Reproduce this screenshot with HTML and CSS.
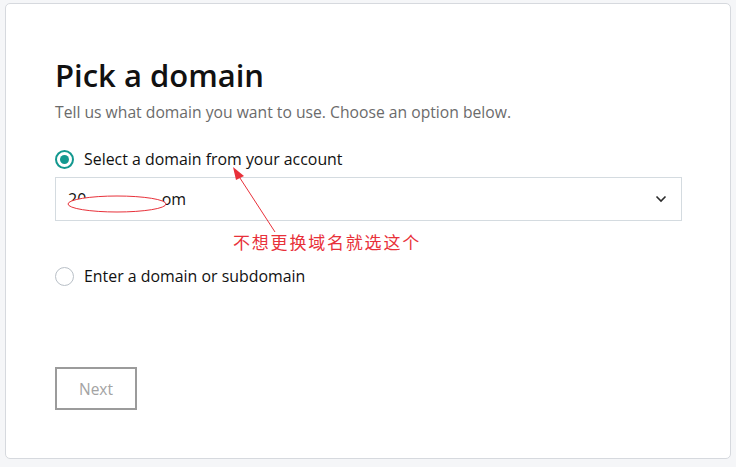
FILE: index.html
```html
<!DOCTYPE html>
<html>
<head>
<meta charset="utf-8">
<link rel="stylesheet" href="styles.css">
</head>
<body>
<div class="card">
  <h1 class="title">Pick a domain</h1>
  <p class="subtitle">Tell us what domain you want to use. Choose an option below.</p>
  <label class="option">
    <span class="radio checked"><span class="dot"></span></span>
    <span class="label">Select a domain from your account</span>
  </label>
  <div class="select">
    <span class="value">20<span class="hidden">xxxxxxxxx</span>om</span>
    <svg class="chev" width="12" height="8" viewBox="0 0 12 8"><path d="M1.5 1.5 L6 6 L10.5 1.5" fill="none" stroke="#2b2b2b" stroke-width="1.6"/></svg>
  </div>
  <div class="note-row"><span class="note">不想更换域名就选这个</span></div>
  <label class="option option2">
    <span class="radio"></span>
    <span class="label">Enter a domain or subdomain</span>
  </label>
  <button class="next">Next</button>
  <svg class="overlay" width="736" height="467" viewBox="0 0 736 467">
    <ellipse cx="117" cy="204" rx="49" ry="8" fill="#fff" stroke="#e8313a" stroke-width="1"/>
    <line x1="275" y1="232" x2="238" y2="175" stroke="#e8313a" stroke-width="1"/>
    <polygon points="233,167 244,176 236,180" fill="#e8313a"/>
  </svg>
</div>
</body>
</html>
```
FILE: styles.css
```css
html, body { margin: 0; padding: 0; }
body {
  background: #f5f6f8;
  width: 736px;
  height: 467px;
  font-family: "Open Sans", "Liberation Sans", sans-serif;
  color: #111;
  overflow: hidden;
}
.card {
  position: relative;
  box-sizing: border-box;
  margin: 3px 0 0 5px;
  width: 726px;
  height: 456px;
  background: #fff;
  border: 1px solid #d6d9de;
  border-radius: 5px;
  padding: 49px 49px 0 49px;
}
.title {
  margin: 0;
  font-size: 31px;
  font-weight: 600;
  letter-spacing: 0;
  line-height: 44px;
  color: #111;
}
.subtitle {
  margin: 4px 0 0 0;
  font-size: 15.7px;
  line-height: 22px;
  color: #6b6b6b;
}
.option {
  display: flex;
  align-items: center;
  gap: 10px;
  margin-top: 24px;
  height: 24px;
}
.radio {
  box-sizing: border-box;
  width: 19px;
  height: 19px;
  border-radius: 50%;
  border: 1px solid #b9c0c7;
  display: flex;
  align-items: center;
  justify-content: center;
  background: #fff;
}
.radio.checked { border: 2px solid #13988f; }
.dot {
  width: 9px;
  height: 9px;
  border-radius: 50%;
  background: #13988f;
}
.label {
  font-size: 15.9px;
  color: #111;
}
.select {
  box-sizing: border-box;
  margin-top: 6px;
  width: 627px;
  height: 44px;
  border: 1px solid #d4dbe0;
  display: flex;
  align-items: center;
  justify-content: space-between;
  padding: 0 14px 0 12px;
}
.value { font-size: 16px; color: #111; }
.hidden { color: #fff; }
.note-row {
  padding-left: 178px;
  height: 33px;
  display: flex;
  align-items: flex-end;
}
.note {
  font-family: "Noto Sans CJK SC", sans-serif;
  font-size: 17px;
  letter-spacing: 1.8px;
  color: #e8313a;
  line-height: 24px;
}
.option2 { margin-top: 10px; }
.next {
  display: block;
  margin-top: 79px;
  width: 82px;
  height: 43px;
  background: #fff;
  border: 2px solid #9b9b9b;
  color: #a3a3a3;
  font-family: "Open Sans", "Liberation Sans", sans-serif;
  font-size: 15.5px;
  padding: 0;
}
.overlay {
  position: absolute;
  left: -6px;
  top: -4px;
  pointer-events: none;
}
```
